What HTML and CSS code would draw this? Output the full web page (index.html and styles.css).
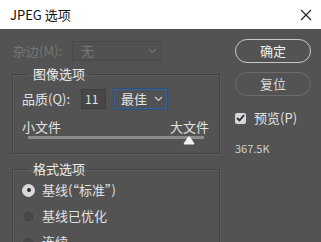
FILE: index.html
```html
<!DOCTYPE html>
<html lang="zh">
<head>
  <meta charset="UTF-8">
  <title>JPEG 选项</title>
  <link rel="stylesheet" href="styles.css">
</head>
<body>

  <div class="dialog">
    <!-- Title bar -->
    <div class="titlebar">
      <span class="title">JPEG 选项</span>
      <svg class="close" width="12" height="12" viewBox="0 0 12 12">
        <path d="M1 1 L11 11 M11 1 L1 11" stroke="#222" stroke-width="1.2" fill="none"/>
      </svg>
    </div>

    <div class="content">
      <div class="left-col">
        <!-- Matte -->
        <div class="matte-row">
          <span class="matte-label">杂边(M):</span>
          <div class="matte-select">
            <span>无</span>
            <svg width="9" height="6" viewBox="0 0 9 6"><path d="M1 1 L4.5 4.5 L8 1" stroke="#707070" stroke-width="1.3" fill="none"/></svg>
          </div>
        </div>

        <!-- Image options -->
        <fieldset class="group image-group">
          <legend>图像选项</legend>
          <div class="quality-row">
            <span class="quality-label">品质(<u>Q</u>):</span>
            <div class="quality-input">11</div>
            <div class="quality-select">
              <span>最佳</span>
              <svg width="9" height="6" viewBox="0 0 9 6"><path d="M1 1 L4.5 4.5 L8 1" stroke="#cfcfcf" stroke-width="1.2" fill="none"/></svg>
            </div>
          </div>
          <div class="size-labels">
            <span>小文件</span>
            <span>大文件</span>
          </div>
          <div class="slider">
            <div class="track"></div>
            <svg class="thumb" width="12" height="9" viewBox="0 0 12 9">
              <path d="M6 0.5 Q6.8 0.5 7.6 1.8 L11.2 7.2 Q11.6 8.5 10.4 8.5 L1.6 8.5 Q0.4 8.5 0.8 7.2 L4.4 1.8 Q5.2 0.5 6 0.5 Z" fill="#f2f2f2"/>
            </svg>
          </div>
        </fieldset>

        <!-- Format options -->
        <fieldset class="group format-group">
          <legend>格式选项</legend>
          <div class="radio-row">
            <span class="radio checked"></span>
            <span>基线(“标准”)</span>
          </div>
          <div class="radio-row">
            <span class="radio"></span>
            <span>基线已优化</span>
          </div>
          <div class="radio-row">
            <span class="radio"></span>
            <span>连续</span>
          </div>
        </fieldset>
      </div>

      <div class="right-col">
        <div class="btn btn-primary">确定</div>
        <div class="btn">复位</div>
        <div class="preview-row">
          <span class="checkbox">
            <svg width="9" height="8" viewBox="0 0 9 8"><path d="M1 4 L3.5 6.5 L8 1.2" stroke="#2e2e2e" stroke-width="1.8" fill="none"/></svg>
          </span>
          <span>预览(<u>P</u>)</span>
        </div>
        <div class="file-size">367.5K</div>
      </div>
    </div>
  </div>

</body>
</html>
```

FILE: styles.css
```css
body {
  margin: 0;
  width: 321px;
  height: 242px;
  overflow: hidden;
  background-color: #535353;
  font-family: "Noto Sans CJK SC", "Noto Sans", sans-serif;
  font-size: 13px;
  line-height: 16px;
  color: #e2e2e2;
}

.titlebar {
  height: 29px;
  background-color: #fff;
  display: flex;
  align-items: center;
  justify-content: space-between;
  padding: 0 9px 0 10px;
}

.title {
  color: #111;
  font-size: 13px;
}

.close {
  margin-top: 1px;
}

.content {
  display: flex;
  padding: 10px 0 0 12px;
}

.left-col {
  width: 208px;
}

.right-col {
  margin-left: 15px;
  width: 76px;
  display: flex;
  flex-direction: column;
}

/* matte row */
.matte-row {
  display: flex;
  align-items: center;
  height: 20px;
  margin-top: 2px;
}

.matte-label {
  color: #767676;
  width: 59px;
  padding-left: 1px;
}

.matte-select {
  width: 76px;
  height: 18px;
  border: 1px solid #494949;
  background-color: #515151;
  display: flex;
  align-items: center;
  justify-content: space-between;
  padding: 0 4px 0 8px;
  color: #787878;
}

/* group boxes */
.group {
  margin: 0;
  border: 1px solid #434343;
  box-shadow: inset 1px 1px 0 #5e5e5e, 1px 1px 0 #5e5e5e;
  padding: 0 9px;
}

.group legend {
  margin-left: 7px;
  padding: 0 4px;
  color: #ececec;
}

.image-group {
  margin-top: 5px;
  padding-bottom: 8px;
}

.quality-row {
  display: flex;
  align-items: center;
  margin-top: 7px;
  height: 20px;
}

.quality-label {
  width: 59px;
}

.quality-label u,
.preview-row u {
  text-decoration: none;
}

.quality-input {
  width: 20px;
  height: 18px;
  border: 1px solid #3e3e3e;
  background-color: #474747;
  padding-left: 3px;
  line-height: 18px;
  font-size: 12px;
}

.quality-select {
  margin-left: 8px;
  width: 42px;
  height: 18px;
  border: 1px solid #35629a;
  box-shadow: 0 0 0 1px #2f4f75;
  background-color: #4f5155;
  display: flex;
  align-items: center;
  justify-content: space-between;
  padding: 0 3px 0 6px;
}

.size-labels {
  display: flex;
  justify-content: space-between;
  margin-top: 10px;
  padding-right: 1px;
}

.slider {
  position: relative;
  height: 9px;
  margin: 1px 6px 0 6px;
}

.track {
  height: 3px;
  margin-top: 1px;
  background-color: #8b8b8b;
}

.thumb {
  position: absolute;
  left: 155px;
  top: 0;
}

.format-group {
  margin-top: 7px;
  padding-top: 0;
}

.radio-row {
  display: flex;
  align-items: center;
  height: 26px;
}

.radio {
  width: 11px;
  height: 11px;
  border-radius: 50%;
  border: 1px solid #5e5e5e;
  background-color: #484848;
  margin-right: 7px;
  display: flex;
  align-items: center;
  justify-content: center;
}

.radio.checked {
  background-color: #d9d9d9;
  border-color: #d9d9d9;
}

.radio.checked::after {
  content: "";
  width: 4px;
  height: 4px;
  border-radius: 50%;
  background-color: #2c2c2c;
}

/* buttons */
.btn {
  height: 22px;
  border: 1px solid #6b6b6b;
  border-radius: 12px;
  display: flex;
  align-items: center;
  justify-content: center;
  color: #d8d8d8;
  margin-bottom: 9px;
}

.btn-primary {
  border: 1.5px solid #c8c8c8;
  color: #f0f0f0;
}

.preview-row {
  display: flex;
  align-items: center;
  margin-top: 5px;
}

.checkbox {
  width: 11px;
  height: 11px;
  border-radius: 2px;
  background-color: #d6d6d6;
  display: flex;
  align-items: center;
  justify-content: center;
  margin-right: 8px;
}

.file-size {
  margin-top: 14px;
  font-size: 11px;
  color: #d0d0d0;
}
```
